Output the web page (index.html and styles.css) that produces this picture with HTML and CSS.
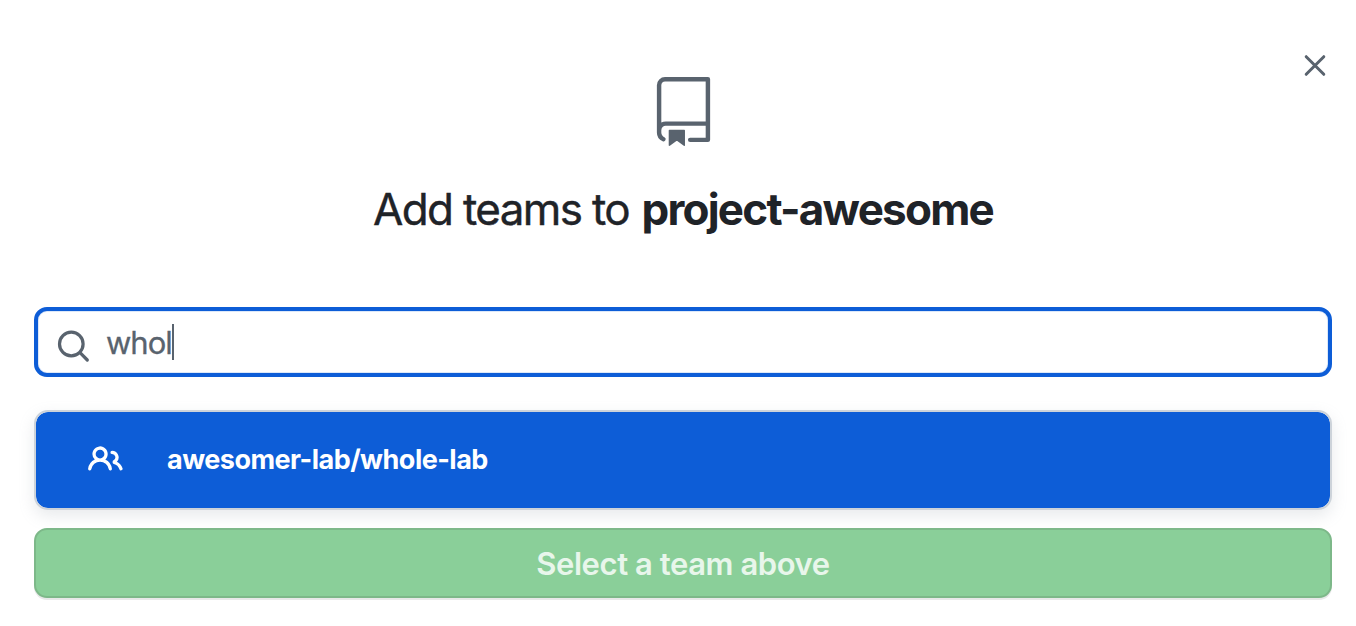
FILE: index.html
```html
<!DOCTYPE html>
<html lang="en">
<head>
<meta charset="utf-8">
<title>Add teams</title>
<link rel="stylesheet" href="styles.css">
</head>
<body>
<main class="dialog">
  <button class="close" aria-label="Close"><svg width="24" height="24" viewBox="0 0 24 24"><path d="M3.2 3.7l17.6 17.6m0-17.6l-17.6 17.6" fill="none" stroke="currentColor" stroke-width="3" stroke-linecap="round"/></svg></button>
  <svg class="repo-icon" width="71" height="71" viewBox="0 0 24 24" fill="currentColor"><path fill-rule="evenodd" d="M3 2.75A2.75 2.75 0 015.75 0h14.5a.75.75 0 01.75.75v20.5a.75.75 0 01-.75.75h-6a.75.75 0 010-1.5h5.25v-4H6A1.5 1.5 0 004.5 18v.75c0 .716.43 1.334 1.05 1.605a.75.75 0 01-.6 1.374A3.25 3.25 0 013 18.75v-16zM19.5 1.5V15H6c-.546 0-1.059.146-1.5.401V2.75c0-.69.56-1.25 1.25-1.25H19.5z"/><path d="M7 18.05a.25.25 0 01.25-.25h5a.25.25 0 01.25.25v5.01a.25.25 0 01-.397.201l-2.206-1.604a.25.25 0 00-.294 0L7.397 23.26a.25.25 0 01-.397-.2v-5.01z"/></svg>
  <h1 class="title"><span class="lead">Add teams to</span> <strong class="repo">project-awesome</strong></h1>
  <div class="search">
    <svg class="search-icon" width="34" height="34" viewBox="0 0 34 34" fill="none" stroke="currentColor" stroke-width="3.2" stroke-linecap="round"><circle cx="14.3" cy="14" r="11.8"/><path d="M23 22.7l7.3 7.3"/></svg>
    <span class="query">whol</span><span class="caret"></span>
  </div>
  <div class="result">
    <svg class="people-icon" width="35" height="35" viewBox="0 0 16 16" fill="currentColor"><path fill-rule="evenodd" d="M5.5 3.5a2 2 0 100 4 2 2 0 000-4zM2 5.5a3.5 3.5 0 115.898 2.549 5.507 5.507 0 013.034 4.084.75.75 0 11-1.482.235 4.001 4.001 0 00-7.9 0 .75.75 0 01-1.482-.236A5.507 5.507 0 013.102 8.05 3.49 3.49 0 012 5.5zM11 4a.75.75 0 100 1.5 1.5 1.5 0 01.666 2.844.75.75 0 00-.416.672v.352a.75.75 0 00.574.73c1.2.289 2.162 1.2 2.522 2.372a.75.75 0 101.434-.44 5.01 5.01 0 00-2.56-3.012A3 3 0 0011 4z"/></svg>
    <span class="team">awesomer-lab/whole-lab</span>
  </div>
  <button class="submit" disabled><span class="submit-label">Select a team above</span></button>
</main>
</body>
</html>
```
FILE: styles.css
```css
* { box-sizing: border-box; }
body {
  margin: 0;
  background: #fff;
  color: #1f2328;
  font-family: Inter, "Liberation Sans", sans-serif;
}
.dialog {
  position: relative;
  height: 626px;
  padding: 77px 24px 0 34px;
  display: flex;
  flex-direction: column;
  align-items: center;
  overflow: hidden;
}
.close {
  position: absolute;
  top: 53px;
  right: 29px;
  width: 24px;
  height: 24px;
  padding: 0;
  border: 0;
  background: none;
  color: #59636e;
}
.close svg { display: block; }
.repo-icon { flex: none; color: #59636e; }
.title {
  margin: 31px 0 0;
  height: 60px;
  line-height: 60px;
  font-size: 44px;
  font-weight: 400;
  white-space: nowrap;
}
.lead { letter-spacing: -1.65px; -webkit-text-stroke: .4px currentColor; }
.repo { font-weight: 650; letter-spacing: -1.77px; }
.search {
  width: 100%;
  height: 70px;
  margin-top: 68px;
  padding-left: 19px;
  display: flex;
  align-items: center;
  border: 4px solid #0d5dd7;
  border-radius: 13px;
  box-shadow: inset 0 0 0 1px #dce8f9;
  color: #59636e;
}
.search-icon { margin-top: 10px; }
.query {
  margin: 2px 0 0 15px;
  font-size: 31px;
  line-height: 40px;
  letter-spacing: -1px;
  -webkit-text-stroke: .3px currentColor;
}
.caret { width: 2px; height: 36px; background: #59636e; }
.result {
  width: 100%;
  height: 100px;
  margin-top: 33px;
  padding: 0 0 1px 52px;
  display: flex;
  align-items: center;
  border: 2px solid #cdd3da;
  border-radius: 14px;
  background: #0d5dd7;
  background-clip: padding-box;
  box-shadow: 0 6px 16px rgba(140, 149, 159, .2);
  color: #fff;
}
.team {
  margin: 0 0 0 44px;
  font-size: 27px;
  font-weight: 700;
  letter-spacing: -.52px;
}
.submit {
  width: 100%;
  height: 70px;
  margin-top: 18px;
  padding: 0;
  border: 2px solid #7db889;
  border-radius: 13px;
  background: #8acf99;
  box-shadow: 0 2px 0 rgba(31, 35, 40, .1);
  color: #e8f6eb;
  font: 600 31px Inter, "Liberation Sans", sans-serif;
  letter-spacing: -.43px;
}
```
